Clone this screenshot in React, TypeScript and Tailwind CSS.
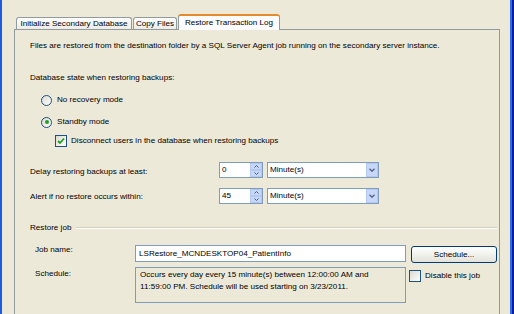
import React from "react";

function Radio({ checked }: { checked?: boolean }) {
  return (
    <div className="w-[11px] h-[11px] rounded-full border border-[#1C5180] bg-gradient-to-br from-[#DCD9CE] to-white flex items-center justify-center shrink-0">
      {checked && <div className="w-[4px] h-[4px] rounded-full bg-[#21A121]" />}
    </div>
  );
}

function Check({ checked }: { checked?: boolean }) {
  return (
    <div className="w-[12px] h-[12px] border border-[#1C5180] bg-gradient-to-br from-[#DCD9CE] to-white flex items-center justify-center shrink-0">
      {checked && (
        <svg width="8" height="8" viewBox="0 0 8 8">
          <path d="M1 4 L3 6 L7 1.5" stroke="#21A121" strokeWidth="1.8" fill="none" />
        </svg>
      )}
    </div>
  );
}

function Spinner({ value }: { value: string }) {
  return (
    <div className="w-[44px] h-[16px] border border-[#7F9DB9] bg-white flex items-center shrink-0">
      <span className="pl-[2px] flex-1">{value}</span>
      <div className="w-[12px] h-[14px] flex flex-col">
        <div className="h-[7px] bg-[#C6D7F8] border border-[#B4C8F0] flex items-center justify-center">
          <svg width="5" height="3" viewBox="0 0 5 3">
            <path d="M0.5 2.5 L2.5 0.5 L4.5 2.5" stroke="#4D6185" strokeWidth="1" fill="none" />
          </svg>
        </div>
        <div className="h-[7px] bg-[#C6D7F8] border border-[#B4C8F0] flex items-center justify-center">
          <svg width="5" height="3" viewBox="0 0 5 3">
            <path d="M0.5 0.5 L2.5 2.5 L4.5 0.5" stroke="#4D6185" strokeWidth="1" fill="none" />
          </svg>
        </div>
      </div>
    </div>
  );
}

function Combo({ value }: { value: string }) {
  return (
    <div className="w-[112px] h-[16px] border border-[#7F9DB9] bg-white flex items-center shrink-0">
      <span className="pl-[2px] flex-1">{value}</span>
      <div className="w-[12px] h-[14px] bg-[#C6D7F8] border border-[#B4C8F0] flex items-center justify-center">
        <svg width="6" height="4" viewBox="0 0 6 4">
          <path d="M0.5 0.8 L3 3.2 L5.5 0.8" stroke="#4D6185" strokeWidth="1.3" fill="none" />
        </svg>
      </div>
    </div>
  );
}

export default function App() {
  return (
    <div className="w-[514px] h-[314px] bg-[#ECE9D8] flex overflow-hidden text-black text-[8.1px] leading-[12px] font-['Liberation_Sans',Arial,sans-serif]">
      <div className="w-[2px] h-full bg-[#1D5BDF] shrink-0" />
      <div className="flex-1 flex flex-col pl-[12px] pr-[10px]">
        {/* tabs */}
        <div className="flex items-end h-[15px] mt-[14px] pl-[2px]">
          <div className="w-[116px] h-[12px] border border-b-0 border-[#919B9C] rounded-t-[3px] bg-gradient-to-b from-white to-[#ECEBE6] flex items-center justify-center">
            Initialize Secondary Database
          </div>
          <div className="ml-[1px] w-[44px] h-[12px] border border-b-0 border-[#919B9C] rounded-t-[3px] bg-gradient-to-b from-white to-[#ECEBE6] flex items-center justify-center">
            Copy Files
          </div>
          <div className="relative z-10 -mb-[1px] ml-[1px] w-[102px] h-[16px] border border-b-0 border-[#919B9C] border-t-[#E68B2C] border-t-2 rounded-t-[3px] bg-[#FCFCFE] flex items-start justify-center pt-[1px]">
            Restore Transaction Log
          </div>
        </div>
        {/* panel */}
        <div className="flex-1 border border-b-0 border-[#919B9C] bg-[#ECE9D8] flex flex-col pl-[15px] pr-[2px]">
          <div className="mt-[10px] h-[12px] flex items-center">
            Files are restored from the destination folder by a SQL Server Agent job running on the secondary server instance.
          </div>
          <div className="mt-[20px] h-[12px] flex items-center">Database state when restoring backups:</div>
          <div className="mt-[9px] h-[14px] flex items-center pl-[11px] gap-[5px]">
            <Radio />
            <span>No recovery mode</span>
          </div>
          <div className="mt-[8px] h-[14px] flex items-center pl-[11px] gap-[5px]">
            <Radio checked />
            <span>Standby mode</span>
          </div>
          <div className="mt-[5px] h-[13px] flex items-center pl-[25px] gap-[4px]">
            <Check checked />
            <span>Disconnect users in the database when restoring backups</span>
          </div>
          <div className="mt-[15px] h-[16px] flex items-center">
            <span className="w-[189px] pt-[3px]">Delay restoring backups at least:</span>
            <Spinner value="0" />
            <div className="w-[4px]" />
            <Combo value="Minute(s)" />
          </div>
          <div className="mt-[10px] h-[16px] flex items-center">
            <span className="w-[189px] pt-[1px]">Alert if no restore occurs within:</span>
            <Spinner value="45" />
            <div className="w-[4px]" />
            <Combo value="Minute(s)" />
          </div>
          <div className="mt-[18px] h-[12px] flex items-center gap-[5px]">
            <span>Restore job</span>
            <div className="flex-1 h-[2px] border-t border-[#D0D0BF] border-b border-b-white" />
          </div>
          <div className="mt-[11px] h-[18px] flex items-start">
            <span className="ml-[5px] w-[100px] leading-[10px]">Job name:</span>
            <div className="w-[271px] h-[17px] border border-[#7F9DB9] bg-white flex items-center pl-[3px]">
              LSRestore_MCNDESKTOP04_PatientInfo
            </div>
            <div className="ml-[5px] mt-[1px] w-[86px] h-[17px] border border-[#003C74] rounded-[3px] bg-gradient-to-b from-white to-[#E3E3DB] flex items-center justify-center">
              Schedule...
            </div>
          </div>
          <div className="mt-[4px] flex items-start">
            <span className="ml-[5px] w-[100px] pt-[1px]">Schedule:</span>
            <div className="w-[271px] h-[36px] border border-[#7F9DB9] bg-[#ECE9D8] px-[4px] pt-[1px]">
              Occurs every day every 15 minute(s) between 12:00:00 AM and
              <br />
              11:59:00 PM. Schedule will be used starting on 3/23/2011.
            </div>
            <div className="ml-[3px] mt-[3px] flex items-center gap-[4px]">
              <Check />
              <span>Disable this job</span>
            </div>
          </div>
        </div>
      </div>
      <div className="w-[2px] h-full bg-[#2E6BEA] shrink-0" />
      <div className="w-[2px] h-full bg-[#0A1EA0] shrink-0" />
    </div>
  );
}
